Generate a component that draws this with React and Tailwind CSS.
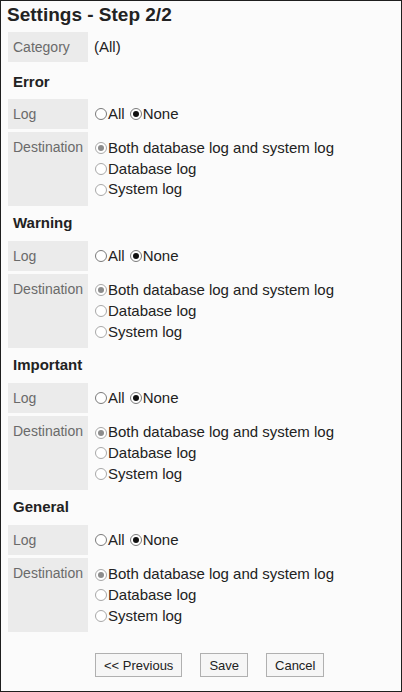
import React from "react";

const sections = ["Error", "Warning", "Important", "General"];

function Radio({ checked, dim }) {
  return (
    <span
      className={
        "flex items-center justify-center w-[12px] h-[12px] mr-[1px] ml-[1px] rounded-full border bg-white shrink-0 " +
        (dim ? "border-[#a8a8a8]" : "border-[#7a7a7a]")
      }
    >
      {checked && (
        <span
          className={
            "block w-[6px] h-[6px] rounded-full " +
            (dim ? "bg-[#8c8c8c]" : "bg-[#111]")
          }
        />
      )}
    </span>
  );
}

function Option({ checked, dim, children }) {
  return (
    <div className="flex items-center whitespace-nowrap">
      <Radio checked={checked} dim={dim} />
      <span>{children}</span>
    </div>
  );
}

function Row({ label, children, tall }) {
  return (
    <div className="flex ml-[7px]">
      <div className="w-[80px] shrink-0 bg-[#ebebeb] px-[5px] pt-[5px] text-[14px] leading-[20px] text-[#6a6a6a]">
        {label}
      </div>
      <div
        className={
          "pl-[6px] text-[15px] text-[#222] " +
          (tall
            ? "py-[6px] leading-[20.7px] flex flex-col"
            : "py-[5px] leading-[20px] flex items-center gap-[4px]")
        }
      >
        {children}
      </div>
    </div>
  );
}

export default function App() {
  return (
    <div className="w-[402px] h-[692px] border border-[#1e1e1e] bg-[#fbfbfb] font-['Liberation_Sans',Arial,sans-serif] text-[#222] overflow-hidden">
      <h1 className="ml-[6px] mt-[3px] text-[19px] leading-[22px] font-bold">
        Settings - Step 2/2
      </h1>

      <div className="mt-[6px]">
        <Row label="Category">(All)</Row>
      </div>

      {sections.map((name, i) => (
        <div key={name} className={i === 0 ? "mt-[10px]" : "mt-[7px]"}>
          <h2
            className={
              "ml-[12px] text-[15px] leading-[20px] font-bold " +
              (i === 0 ? "mb-[7px]" : "mb-[8px]")
            }
          >
            {name}
          </h2>
          <Row label="Log">
            <Option>All</Option>
            <Option checked>None</Option>
          </Row>
          <div className="h-[3px]" />
          <Row label="Destination" tall>
            <Option checked dim>Both database log and system log</Option>
            <Option dim>Database log</Option>
            <Option dim>System log</Option>
          </Row>
        </div>
      ))}

      <div className="flex gap-[18px] ml-[94px] mt-[21px]">
        <button className="h-[24px] px-[8px] border border-[#b0b0b0] bg-[#f6f6f6] text-[13px] text-[#222]">
          &lt;&lt; Previous
        </button>
        <button className="h-[24px] px-[8px] border border-[#b0b0b0] bg-[#f6f6f6] text-[13px] text-[#222]">
          Save
        </button>
        <button className="h-[24px] px-[8px] border border-[#b0b0b0] bg-[#f6f6f6] text-[13px] text-[#222]">
          Cancel
        </button>
      </div>
    </div>
  );
}
